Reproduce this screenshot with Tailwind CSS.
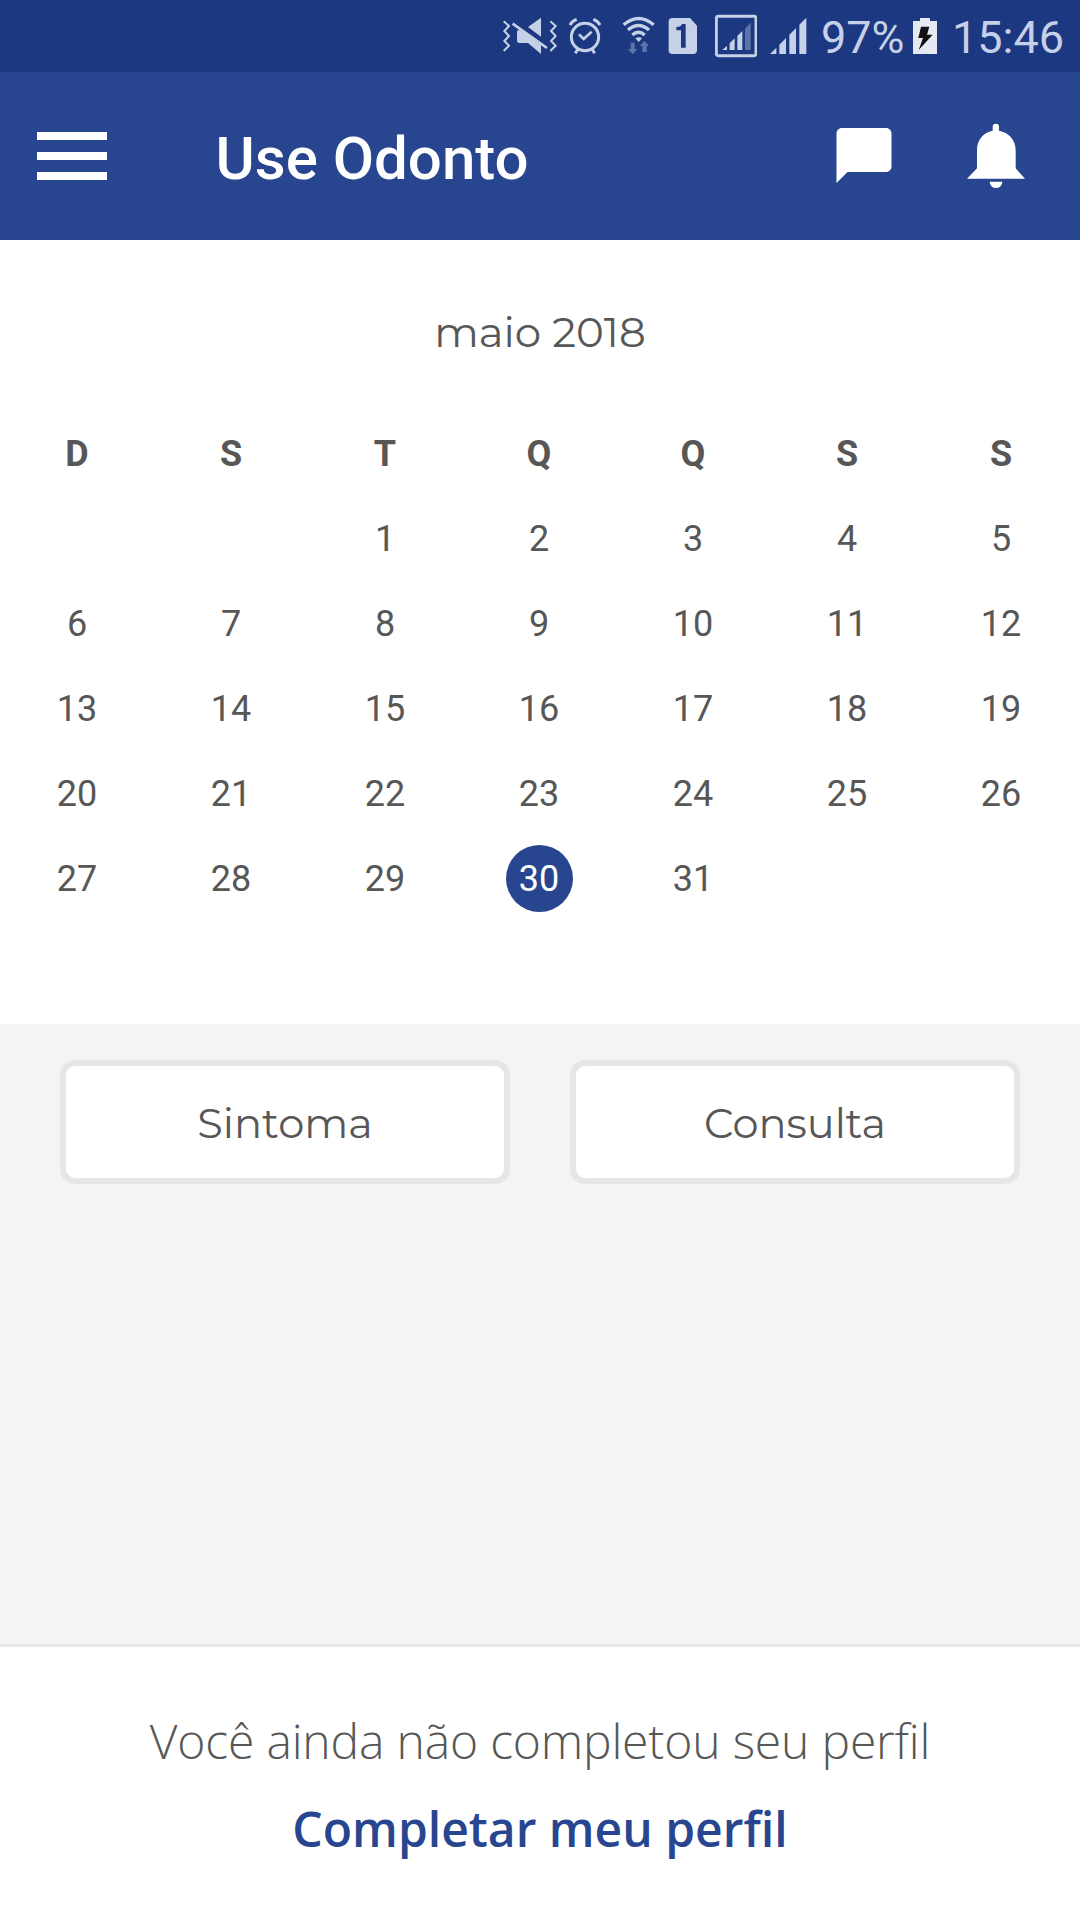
<!DOCTYPE html>
<html lang="pt-BR">
<head>
  <meta charset="UTF-8" />
  <title>Use Odonto</title>
  <meta name="viewport" content="width=device-width, initial-scale=1" />
  <script src="https://cdn.jsdelivr.net/npm/@tailwindcss/browser@4"></script>
</head>
<body class="bg-[#f4f4f4] h-[1920px] w-[1080px] flex flex-col overflow-hidden font-['Roboto',sans-serif] text-[#575757]">

  <!-- Status bar -->
  <div class="h-[72px] shrink-0 bg-[#1b3880] flex items-center pl-[502px] text-[#c6d0e8] whitespace-nowrap">
    <!-- Vibrate / muted -->
    <svg class="w-[56px] h-[72px] shrink-0" viewBox="36 0 168 216" fill="none" stroke="currentColor">
      <path d="M41 64l16 14-14 15 14 15-14 15 14 14-16 16M181 64l16 14-14 15 14 15-14 15 14 14-16 16" stroke-width="6" />
      <path d="M153 53v57l-39-29zM82 91l13-1 58 46v26l-39-33H88q-7 0-7-7V98z" fill="currentColor" stroke="none" />
      <path d="M68 71l103 73" stroke-width="8" />
    </svg>
    <!-- Alarm -->
    <svg class="w-[34px] h-[72px] shrink-0 ml-[10px]" viewBox="234 0 102 216" fill="none" stroke="currentColor">
      <circle cx="285" cy="111" r="41" stroke-width="9" />
      <path d="M240 75q6-12 20-17M330 75q-6-12-20-17" stroke-width="9" />
      <path d="M264 147l-8 13M306 147l8 13" stroke-width="9" />
      <path d="M267 103l14 14 24-22" stroke-width="8" />
    </svg>
    <!-- Wi-Fi -->
    <svg class="w-[34px] h-[72px] shrink-0 ml-[20px]" viewBox="396 0 102 216" fill="none" stroke="currentColor">
      <path d="M401 74q45-37 90 0M414 90q31-27 63 0M427 105q18-16 37 0" stroke-width="10" />
      <path d="M436 115q10-7 20 0l-10 11z" fill="currentColor" stroke="none" />
      <path d="M422 128h12v19h8l-14 16-14-16h8zM457 156v-18h-8l14-15 14 15h-7v18z" fill="#5d74ab" stroke="none" />
    </svg>
    <!-- SIM -->
    <svg class="w-[30px] h-[72px] shrink-0 ml-[12px]" viewBox="533 0 90 216">
      <path d="M546 54h53l21 23v74q0 11-11 11h-63q-11 0-11-11V65q0-11 11-11z" fill="currentColor" />
      <path d="M575 72h11v71h-14V91h-14v-10q14 0 17-9z" fill="#1b3880" />
    </svg>
    <!-- Signal, SIM 1 -->
    <svg class="w-[42px] h-[72px] shrink-0 ml-[17px]" viewBox="673 0 126 216" fill="currentColor">
      <rect x="677" y="49" width="119" height="118" rx="6" fill="none" stroke="currentColor" stroke-width="9" />
      <path d="M695 150l14-13v13zM717 130l15-15v35h-15zM740 108l15-15v57h-15z" />
      <path d="M763 86l17-18v82h-17z" fill="#5d74ab" />
    </svg>
    <!-- Signal, SIM 2 -->
    <svg class="w-[37px] h-[72px] shrink-0 ml-[13px]" viewBox="839 0 111 216" fill="currentColor">
      <path d="M839 162l19-19v19zM867 134l20-20v48h-20zM897 104l20-20v78h-20zM927 74l21-21v109h-21z" />
    </svg>
    <span class="ml-[14px] w-[84px] text-[45px] leading-[72px] pt-[3px]">97%</span>
    <!-- Battery -->
    <svg class="w-[24px] h-[72px] shrink-0 ml-[8px]" viewBox="399 0 72 216">
      <path d="M399 63h21v-9h30v9h21v99h-72z" fill="#e6e9f3" />
      <path d="M423 80h25l-7 24h17l-42 46 13-36h-14z" fill="#111" />
    </svg>
    <span class="ml-[15px] text-[45px] leading-[72px] pt-[3px]">15:46</span>
  </div>

  <!-- App bar -->
  <header class="h-[168px] shrink-0 bg-[#28468f] text-white flex items-start pl-[37px]">
    <div class="w-[70px] pt-[60px] flex flex-col gap-[12px]">
      <span class="h-[8px] bg-white"></span>
      <span class="h-[8px] bg-white"></span>
      <span class="h-[8px] bg-white"></span>
    </div>
    <h1 class="ml-[108.5px] w-[620.5px] pt-[52px] text-[60px] leading-[70px] font-medium">Use Odonto</h1>
    <svg class="w-[56px] h-[55px] mt-[56px] shrink-0" viewBox="2 2 20 20" fill="currentColor">
      <path d="M20 2H4c-1.100 0-2 .9-2 2v18l4-4h14c1.100 0 2-.9 2-2V4c0-1.100-.9-2-2-2z" />
    </svg>
    <svg class="w-[58px] h-[66px] mt-[51px] ml-[75px] shrink-0" viewBox="501 159 174 198" fill="currentColor">
      <path d="M578 182v-11a9.500 9.500 0 0 1 19 0v11c29 5 50 28 50 58v55l28 31H501l30-31v-55c0-30 19-53 47-58z" />
      <path d="M569 335h38a19 19 0 0 1-38 0z" />
    </svg>
  </header>

  <!-- Calendar -->
  <section class="h-[784px] shrink-0 bg-white flex flex-col">
    <h2 class="mt-[64px] h-[56px] text-center font-['Montserrat','Inter',sans-serif] font-[450] text-[42px] leading-[56px]">maio 2018</h2>
    <div id="calendar" class="mt-[51px] w-[1078px] grid grid-cols-7 auto-rows-[85px] text-[36px] text-center"></div>
  </section>

  <!-- Actions -->
  <main class="grow flex items-start gap-[60px] px-[60px] pt-[36px] font-['Montserrat','Inter',sans-serif] font-[450] text-[41.5px]">
    <button class="w-[450px] h-[124px] pt-[2px] bg-white border-6 border-[#e6e6e6] rounded-[15px]">Sintoma</button>
    <button class="w-[450px] h-[124px] pt-[2px] bg-white border-6 border-[#e6e6e6] rounded-[15px]">Consulta</button>
  </main>

  <!-- Profile -->
  <footer class="h-[276px] shrink-0 bg-white border-t-3 border-[#e6e6e6] pt-[61px] text-center font-['Open_Sans',sans-serif] text-[48px] leading-[66px]">
    <p class="font-light tracking-[-0.17px]">Você ainda não completou seu perfil</p>
    <a href="#" class="block mt-[22px] font-semibold text-[#28468f]">Completar meu perfil</a>
  </footer>

  <script>
    const calendar = document.getElementById("calendar");
    const weekdays = ["D", "S", "T", "Q", "Q", "S", "S"];
    const firstDay = 2;
    const today = 30;

    weekdays.forEach(day => {
      calendar.innerHTML += `<div class="flex items-center justify-center font-bold">${day}</div>`;
    });

    for (let i = 0; i < firstDay; i++) {
      calendar.innerHTML += `<div></div>`;
    }

    for (let day = 1; day <= 31; day++) {
      const circle = day === today ? "bg-[#28468f] text-white" : "";
      calendar.innerHTML += `<div class="flex items-center justify-center"><span class="size-[67px] rounded-full leading-[68px] ${circle}">${day}</span></div>`;
    }
  </script>

</body>
</html>
